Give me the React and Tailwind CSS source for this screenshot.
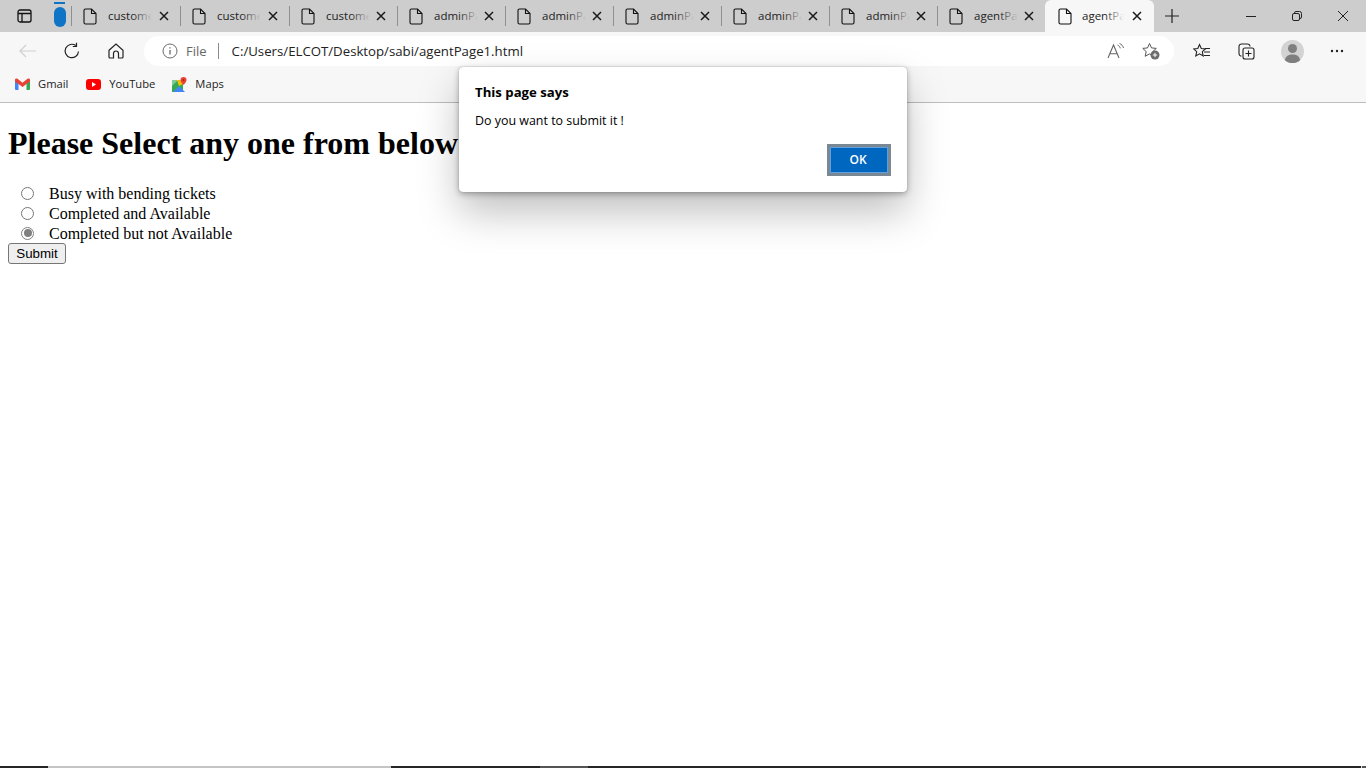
import React from 'react';

const segoe = "font-['Open_Sans','Noto_Sans',sans-serif]";

const tabs = [
    { title: 'custome', w: 109 },
    { title: 'custome', w: 109 },
    { title: 'custome', w: 108 },
    { title: 'adminPa', w: 108 },
    { title: 'adminPa', w: 108 },
    { title: 'adminPa', w: 108 },
    { title: 'adminPa', w: 108 },
    { title: 'adminPa', w: 108 },
    { title: 'agentPa', w: 107 },
];

function PageIcon() {
    return (
        <svg width="14" height="17" viewBox="0 0 14 17" fill="none" stroke="#111" strokeWidth="1.100" className="shrink-0">
            <path d="M2.500 1h6L13 5.500v9a1.500 1.500 0 0 1-1.500 1.500h-9A1.500 1.500 0 0 1 1 14.500v-12A1.500 1.500 0 0 1 2.500 1z" />
            <path d="M8.500 1v4.500H13" />
        </svg>
    );
}

function CloseIcon() {
    return (
        <svg width="10" height="10" viewBox="0 0 10 10" stroke="#1a1a1a" strokeWidth="1.500" className="shrink-0">
            <path d="M1 1l8 8M9 1l-8 8" />
        </svg>
    );
}

function Tab({ title, w, last }) {
    return (
        <div
            style={{ width: w }}
            className={`flex items-center h-[20px] shrink-0 pl-[11px] pr-[11px] ${last ? '' : 'border-r border-[#8f8f8f]'}`}
        >
            <PageIcon />
            <div className="ml-[11px] w-[46px] whitespace-nowrap text-[11.500px] leading-[16px] text-[#222] relative">
                {title}
                <div className="absolute inset-y-0 left-[24px] w-[25px] bg-linear-to-r from-transparent to-[#cdcdcd] to-80%" />
            </div>
            <div className="ml-auto"><CloseIcon /></div>
        </div>
    );
}

function ActiveTab() {
    return (
        <div className="flex items-center w-[109px] h-[32px] shrink-0 pl-[13px] pr-[12px] bg-[#f7f7f7] rounded-t-[6px]">
            <PageIcon />
            <div className="ml-[10px] w-[44px] whitespace-nowrap text-[11.500px] leading-[16px] text-[#222] relative">
                agentPa
                <div className="absolute inset-y-0 left-[22px] w-[25px] bg-linear-to-r from-transparent to-[#f7f7f7] to-80%" />
            </div>
            <div className="ml-auto"><CloseIcon /></div>
        </div>
    );
}

function TabStrip() {
    return (
        <div className="flex items-center h-[32px] bg-[#cdcdcd]">
            <div className="w-[48px] flex justify-center shrink-0">
                <svg width="15" height="14" viewBox="0 0 15 14" fill="none" stroke="#111" strokeWidth="1.300">
                    <rect x="1" y="1" width="13" height="12" rx="2" />
                    <path d="M1 4.500h13M5 4.500V13" />
                </svg>
            </div>
            <div className="relative w-[23px] h-[32px] flex justify-center items-center shrink-0">
                <div className="absolute top-[2px] w-[11px] h-[2px] bg-[#0f73c6]" />
                <div className="w-[12px] h-[20px] rounded-full bg-[#0f73c6] mt-[2px]" />
            </div>
            <div className="w-px h-[20px] bg-[#8f8f8f] shrink-0" />
            {tabs.map((t, i) => (
                <Tab key={i} title={t.title} w={t.w} last={i === tabs.length - 1} />
            ))}
            <ActiveTab />
            <div className="w-[36px] flex justify-center shrink-0">
                <svg width="14" height="14" viewBox="0 0 14 14" stroke="#222" strokeWidth="1.200">
                    <path d="M7 0v14M0 7h14" />
                </svg>
            </div>
            <div className="flex-1" />
            <div className="w-[46px] flex justify-center">
                <svg width="10" height="10" viewBox="0 0 10 10" stroke="#222"><path d="M0 5.500h10" /></svg>
            </div>
            <div className="w-[46px] flex justify-center">
                <svg width="10" height="10" viewBox="0 0 10 10" fill="none" stroke="#222">
                    <rect x="0.500" y="2.500" width="7" height="7" rx="1.500" />
                    <path d="M2.500 2.500V2a1.500 1.500 0 0 1 1.500-1.500h3.500A2 2 0 0 1 9.500 2.500V6A1.500 1.500 0 0 1 8 7.500" />
                </svg>
            </div>
            <div className="w-[46px] flex justify-center">
                <svg width="10" height="10" viewBox="0 0 10 10" stroke="#222"><path d="M0 0l10 10M10 0L0 10" /></svg>
            </div>
        </div>
    );
}

function AddressBar() {
    return (
        <div className="flex items-center h-[38px] bg-[#f7f7f7]">
            <div className="w-[56px] flex justify-center shrink-0">
                <svg width="18" height="14" viewBox="0 0 18 14" fill="none" stroke="#cfcfcf" strokeWidth="1.200">
                    <path d="M17 7H1M7 1L1 7l6 6" />
                </svg>
            </div>
            <div className="w-[32px] flex justify-center shrink-0">
                <svg width="18" height="18" viewBox="0 0 18 18" fill="none" stroke="#222" strokeWidth="1.200">
                    <path d="M15.500 9.500A6.700 6.700 0 1 1 12.800 3.600" />
                    <path d="M13.500 0.800v3.700H9.800" />
                </svg>
            </div>
            <div className="w-[56px] flex justify-center shrink-0">
                <svg width="16" height="16" viewBox="0 0 16 16" fill="none" stroke="#222" strokeWidth="1.200">
                    <path d="M1 7.300L8 1l7 6.300V14a1 1 0 0 1-1 1h-3.500v-4.500a2.500 2.500 0 0 0-5 0V15H2a1 1 0 0 1-1-1z" />
                </svg>
            </div>
            <div className="flex items-center w-[1030px] h-[30px] rounded-full bg-white shrink-0">
                <div className="ml-[18px] shrink-0">
                    <svg width="16" height="16" viewBox="0 0 16 16" fill="none" stroke="#6a6a6a" strokeWidth="1">
                        <circle cx="8" cy="8" r="7" />
                        <path d="M8 7v4.500M8 4.200v1.300" strokeWidth="1.300" />
                    </svg>
                </div>
                <span className="ml-[8px] text-[13px] leading-[16px] text-[#666]">File</span>
                <div className="ml-[11px] w-px h-[16px] bg-[#8a8a8a]" />
                <span className="ml-[13px] text-[13.230px] leading-[16px] text-[#222]">C:/Users/ELCOT/Desktop/sabi/agentPage1.html</span>
                <div className="ml-auto flex items-center gap-[18px] pr-[14px]">
                    <svg width="17" height="16" viewBox="0 0 17 16" fill="none" stroke="#666" strokeWidth="1.100">
                        <path d="M1 15L6.500 2 12 15M2.800 10.800h7.400" />
                        <path d="M10.500 2c1.500.6 2.500 1.800 2.800 3.300M12.500 0.500c2 .8 3.500 2.400 4 4.500" strokeWidth="1" />
                    </svg>
                    <svg width="18" height="18" viewBox="0 0 18 18" fill="none">
                        <path d="M7.500 1.500l2 4.400 4.800.5-3.500 3.200 1 4.700-4.300-2.400-4.300 2.400 1-4.700L0.800 6.400l4.700-.5z" stroke="#555" strokeWidth="1" />
                        <circle cx="13" cy="13" r="4.500" fill="#6b6b6b" />
                        <path d="M13 10.800v4.400M10.800 13h4.400" stroke="#fff" strokeWidth="1" />
                    </svg>
                </div>
            </div>
            <div className="w-[56px] flex justify-center shrink-0">
                <svg width="18" height="17" viewBox="0 0 18 17" fill="none" stroke="#222" strokeWidth="1.100">
                    <path d="M6.500 1.500L8.300 5.500l4.200.4-3.200 2.800.9 4.300-3.700-2.200-3.700 2.200.9-4.300L0.600 5.900l4.200-.4z" />
                    <path d="M12 5.500h5M11 9h6M11 12.500h6" />
                </svg>
            </div>
            <div className="w-[32px] flex justify-center shrink-0">
                <svg width="17" height="17" viewBox="0 0 17 17" fill="none" stroke="#222" strokeWidth="1.100">
                    <path d="M3.500 13A2.500 2.500 0 0 1 1 10.500V3.500A2.500 2.500 0 0 1 3.500 1h6A2.500 2.500 0 0 1 12 3.500" />
                    <rect x="5" y="5" width="11" height="11" rx="2" />
                    <path d="M10.500 7.500v6M7.500 10.500h6" />
                </svg>
            </div>
            <div className="w-[60px] flex justify-center shrink-0">
                <div className="w-[23px] h-[23px] rounded-full bg-[#d3d3d3] overflow-hidden">
                    <svg width="23" height="23" viewBox="0 0 23 23" fill="#7f7f7f">
                        <circle cx="11.500" cy="8.500" r="4.500" />
                        <path d="M3.500 23c0-6 3-8.500 8-8.500s8 2.500 8 8.500z" />
                    </svg>
                </div>
            </div>
            <div className="w-[32px] flex justify-center shrink-0 -ml-[1px]">
                <svg width="14" height="4" viewBox="0 0 14 4" fill="#222">
                    <circle cx="2" cy="2" r="1.200" />
                    <circle cx="7" cy="2" r="1.200" />
                    <circle cx="12" cy="2" r="1.200" />
                </svg>
            </div>
        </div>
    );
}

function Bookmarks() {
    return (
        <div className="flex items-center h-[33px] pb-[4px] bg-[#f7f7f7] border-b border-[#bdbdbd] text-[11.200px] leading-[16px] text-[#222]">
            <div className="ml-[15px] flex items-center">
                <svg width="15" height="12" viewBox="0 0 15 12">
                    <path d="M0 2v9a1 1 0 0 0 1 1h2.500V5.500z" fill="#4285f4" />
                    <path d="M15 2v9a1 1 0 0 1-1 1h-2.500V5.500z" fill="#34a853" />
                    <path d="M0 2a1.500 1.500 0 0 1 2.500-1.200L7.500 4.800l5-4A1.500 1.500 0 0 1 15 2v1.500l-3.500 2.500-4 3-4-3L0 3.500z" fill="#ea4335" />
                </svg>
                <span className="ml-[8px]">Gmail</span>
            </div>
            <div className="ml-[18px] flex items-center">
                <svg width="15" height="11" viewBox="0 0 15 11">
                    <rect width="15" height="11" rx="3" fill="#ff0000" />
                    <path d="M6 3l4 2.500L6 8z" fill="#fff" />
                </svg>
                <span className="ml-[8px]">YouTube</span>
            </div>
            <div className="ml-[17px] flex items-center">
                <svg width="15" height="15" viewBox="0 0 15 15">
                    <path d="M0 3h11v12H0z" fill="#34a853" />
                    <path d="M0 3h6L0 9z" fill="#81c995" />
                    <path d="M1 15l6-6 6 6z" fill="#4285f4" />
                    <path d="M5 3h6v4L7 9z" fill="#fbbc04" />
                    <path d="M11.500 0a3 3 0 0 1 3 3c0 2-3 5-3 5s-3-3-3-5a3 3 0 0 1 3-3z" fill="#ea4335" />
                    <circle cx="11.500" cy="3" r="1" fill="#a52714" />
                </svg>
                <span className="ml-[8px]">Maps</span>
            </div>
        </div>
    );
}

function AlertDialog() {
    return (
        <div className={`absolute left-[459px] top-[67px] w-[448px] h-[125px] rounded-[4px] bg-white shadow-[0_0_1px_rgba(0,0,0,0.4),0_2px_6px_rgba(0,0,0,0.3),0_20px_40px_rgba(0,0,0,0.25)] text-black ${segoe}`}>
            <div className="pl-[16px] pt-[16px] text-[13.200px] leading-[18px] font-bold">This page says</div>
            <div className="pl-[16px] pt-[11px] text-[12.450px] leading-[18px]">Do you want to submit it !</div>
            <div className="flex justify-end pr-[16px] pt-[14px]">
                <button className="w-[64px] h-[32px] pr-[2px] bg-[#0067c0] border-[3px] border-[#7a8794] outline outline-1 -outline-offset-4 outline-[#5fa0dc] text-white text-[12px] font-semibold">
                    OK
                </button>
            </div>
        </div>
    );
}

function Radio({ checked }) {
    return (
        <div className={`w-[13px] h-[13px] rounded-full border bg-white flex items-center justify-center shrink-0 ml-[21px] ${checked ? 'border-[#808080]' : 'border-[#767676]'}`}>
            {checked && <div className="w-[8px] h-[8px] rounded-full bg-[#808080]" />}
        </div>
    );
}

function Option({ label, checked }) {
    return (
        <div className="flex items-center h-[20px]">
            <Radio checked={checked} />
            <span className="ml-[15px] mt-[2px]">{label}</span>
        </div>
    );
}

export default function App() {
    return (
        <div className={`relative w-[1366px] h-[768px] overflow-hidden bg-white ${segoe}`}>
            <TabStrip />
            <AddressBar />
            <Bookmarks />
            <main className="font-['Liberation_Serif',serif] text-black text-[16px] pl-[8px]">
                <h1 className="mt-[22px] text-[32px] leading-[37px] font-bold whitespace-nowrap">Please Select any one from below</h1>
                <div className="mt-[21px] -ml-[8px] leading-[18px]">
                    <Option label="Busy with bending tickets" />
                    <Option label="Completed and Available" />
                    <Option label="Completed but not Available" checked />
                </div>
                <button className="block h-[21px] w-[58px] border border-[#767676] rounded-[3px] bg-[#efefef] font-['Liberation_Sans',sans-serif] text-[13.333px] leading-[15px] text-black">
                    Submit
                </button>
            </main>
            <AlertDialog />
            <div className="absolute bottom-0 left-0 right-0 h-[2px] flex bg-[#262626]">
                <div className="w-[48px]" />
                <div className="w-[343px] bg-[#c4c4c4]" />
                <div className="w-[149px]" />
                <div className="w-[48px] bg-[#555]" />
                <div className="flex-1" />
                <div className="w-px bg-[#ddd]" />
                <div className="w-[4px] bg-[#555]" />
            </div>
        </div>
    );
}
